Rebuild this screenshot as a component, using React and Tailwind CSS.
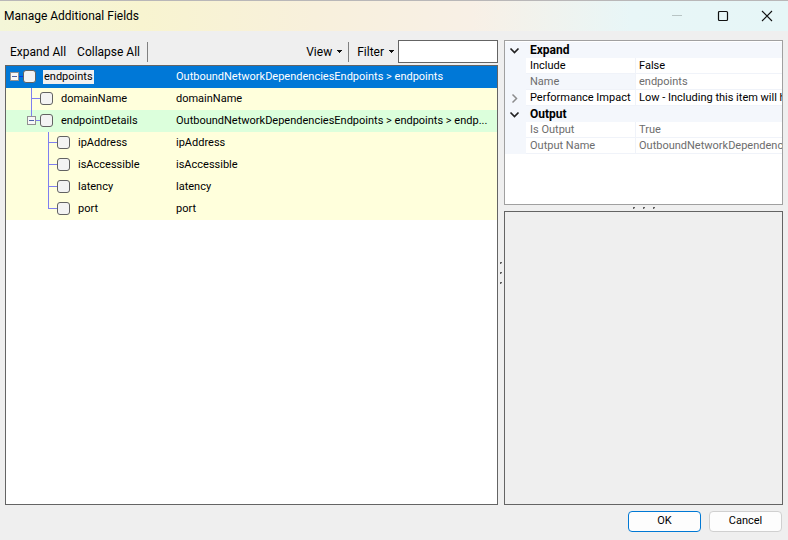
import React from "react";

const fields = [
  { name: "endpoints", path: "OutboundNetworkDependenciesEndpoints > endpoints", depth: 0, expandable: true, tone: "bg-[#0078d7] text-white", selected: true },
  { name: "domainName", path: "domainName", depth: 1, tone: "bg-[#ffffdc]" },
  { name: "endpointDetails", path: "OutboundNetworkDependenciesEndpoints > endpoints > endp...", depth: 1, expandable: true, last: true, tone: "bg-[#dcffdc]" },
  { name: "ipAddress", path: "ipAddress", depth: 2, tone: "bg-[#ffffdc]" },
  { name: "isAccessible", path: "isAccessible", depth: 2, tone: "bg-[#ffffdc]" },
  { name: "latency", path: "latency", depth: 2, tone: "bg-[#ffffdc]" },
  { name: "port", path: "port", depth: 2, last: true, tone: "bg-[#ffffdc]" },
];

const groups = [
  {
    title: "Expand",
    items: [
      { name: "Include", value: "False" },
      { name: "Name", value: "endpoints", muted: true, shaded: true },
      { name: "Performance Impact", value: "Low - Including this item will ha", expandable: true },
    ],
  },
  {
    title: "Output",
    items: [
      { name: "Is Output", value: "True", muted: true },
      { name: "Output Name", value: "OutboundNetworkDependenci", muted: true },
    ],
  },
];

function Guide({ depth, expandable, last }) {
  const width = 17 + depth * 17;
  const x = 8 + depth * 17;
  return (
    <svg width={width} height="22" className="shrink-0" shapeRendering="crispEdges" aria-hidden="true">
      {depth > 0 && <rect x={x} y="0" width="1" height={last ? 11 : 22} fill="#7f7ff0" />}
      <rect x={x} y="10" width={width - x} height="1" fill={depth ? "#7f7ff0" : "#0038e8"} />
      {expandable && (
        <g>
          <rect x={x - 4} y="6" width="9" height="9" fill="#919191" />
          <rect x={x - 3} y="7" width="7" height="7" fill="#f7f7f7" />
          <rect x={x - 2} y="10" width="5" height="1" fill="#4b63a7" />
        </g>
      )}
    </svg>
  );
}

function Chevron({ open }) {
  return (
    <svg width="20" height="15" viewBox="0 0 20 15" fill="none" className="block" aria-hidden="true">
      {open ? (
        <path d="M5.5 5.5 9.5 9.5 13.5 5.5" stroke="#222" strokeWidth="1.7" />
      ) : (
        <path d="M7.5 3.5 11.5 7.5 7.5 11.5" stroke="#8c8c8c" strokeWidth="1.5" />
      )}
    </svg>
  );
}

function MenuButton({ children }) {
  return (
    <button type="button" className="flex items-center gap-[5px]">
      {children}
      <svg width="5" height="3" aria-hidden="true" shapeRendering="crispEdges">
        <path d="M0 0H5V1H4V2H3V3H2V2H1V1H0Z" fill="#111" />
      </svg>
    </button>
  );
}

function Grip({ vertical }) {
  return (
    <div className={vertical ? "flex w-[6px] flex-col items-center justify-center gap-2" : "flex h-[6px] items-center justify-center gap-2"} role="separator">
      {[0, 1, 2].map((i) => (
        <span key={i} className="size-[2px] border-t border-l border-[#606060] bg-[#c4c4c4]" />
      ))}
    </div>
  );
}

export default function App() {
  return (
    <div className="flex h-screen flex-col overflow-hidden bg-[#efefef] font-['Roboto',sans-serif] text-[11px] text-black">
      <header className="flex h-[31px] shrink-0 items-center justify-between border-t border-[#b9b7b8] bg-[linear-gradient(90deg,#f4f6d8_0%,#f8f4d0_18%,#f8f0dc_40%,#f8f0e6_60%,#e8f6f7_80%,#e6f6f7_100%)] pl-1">
        <h1 className="text-[12px]">Manage Additional Fields</h1>
        <div className="flex">
          <button type="button" aria-label="Minimize" disabled className="flex w-[46px] justify-center">
            <svg width="12" height="12"><path d="M1 5.5H11" stroke="#b8c4c4" /></svg>
          </button>
          <button type="button" aria-label="Maximize" className="flex w-[46px] justify-center">
            <svg width="12" height="12"><rect x="1.5" y="1.5" width="9" height="9" rx="1" fill="none" stroke="#111" strokeWidth="1.2" /></svg>
          </button>
          <button type="button" aria-label="Close" className="flex w-[42px] justify-center">
            <svg width="12" height="12"><path d="M1 1 11 11M11 1 1 11" stroke="#111" strokeWidth="1.1" /></svg>
          </button>
        </div>
      </header>

      <main className="flex min-h-0 flex-1 px-[5px] pt-[9px]">
        <section className="flex min-w-0 flex-1 flex-col">
          <div className="flex h-[25px] items-start justify-between text-[12px]">
            <div className="flex h-[23px] items-center gap-[11px] pl-[5px]">
              <button type="button">Expand All</button>
              <button type="button">Collapse All</button>
              <span className="-ml-1 h-5 w-px bg-[#808080]" />
            </div>
            <div className="flex h-[23px] items-center">
              <MenuButton>View</MenuButton>
              <span className="mr-2 ml-[6px] h-5 w-px bg-[#808080]" />
              <MenuButton>Filter</MenuButton>
              <input aria-label="Filter" type="text" className="ml-1 h-[23px] w-[100px] border border-[#646464] bg-white px-1 outline-none" />
            </div>
          </div>
          <div className="min-h-0 flex-1 overflow-hidden border border-[#646464] bg-white">
            <table className="w-full table-fixed border-separate border-spacing-0">
              <colgroup>
                <col className="w-[170px]" />
                <col />
              </colgroup>
              <tbody>
                {fields.map((f) => (
                  <tr key={f.name} className={f.tone}>
                    <td className="p-0">
                      <div className="flex h-[22px] items-center">
                        <Guide depth={f.depth} expandable={f.expandable} last={f.last} />
                        <input id={f.name} type="checkbox" className="mb-px size-[13px] shrink-0 appearance-none rounded-[3px] border border-[#626262] bg-[#f3f3f3]" />
                        <label htmlFor={f.name} className={f.selected ? "ml-[7px] bg-[#f0f0f0] px-px leading-[14px] text-black" : "ml-[7px] px-px leading-[14px]"}>
                          {f.name}
                        </label>
                      </div>
                    </td>
                    <td className="truncate p-0 leading-[22px]">{f.path}</td>
                  </tr>
                ))}
              </tbody>
            </table>
          </div>
        </section>

        <Grip vertical />

        <aside className="flex w-[279px] shrink-0 flex-col">
          <div className="h-[165px] overflow-hidden border border-[#a0a0a0] bg-white pt-px">
            <table className="w-full table-fixed border-separate border-spacing-0 leading-[15px]">
              <colgroup>
                <col className="w-[21px]" />
                <col className="w-[110px]" />
                <col />
              </colgroup>
              {groups.map((g) => (
                <tbody key={g.title}>
                  <tr className="h-4 bg-[#f4f7fc]">
                    <td className="p-0"><Chevron open /></td>
                    <th colSpan={2} className="p-0 pl-1 text-left text-[12px] font-bold">{g.title}</th>
                  </tr>
                  {g.items.map((p) => (
                    <tr key={p.name} className={p.muted ? "h-4 text-[#6d6d6d]" : "h-4"}>
                      <td className="bg-[#f4f7fc] p-0">{p.expandable && <Chevron />}</td>
                      <td className={p.shaded ? "border-r border-b border-[#f0f3f9] bg-[#f4f7fc] p-0 pl-1 whitespace-nowrap" : "border-r border-b border-[#f0f3f9] p-0 pl-1 whitespace-nowrap"}>{p.name}</td>
                      <td className="overflow-hidden border-b border-[#f0f3f9] p-0 pl-[3px] whitespace-nowrap">{p.value}</td>
                    </tr>
                  ))}
                </tbody>
              ))}
            </table>
          </div>
          <Grip />
          <div className="min-h-0 flex-1 border border-[#646464]" />
        </aside>
      </main>

      <footer className="flex h-[35px] shrink-0 items-start justify-end gap-2 px-[6px] pt-[6px]">
        <button type="button" className="h-[21px] w-[73px] rounded-[4px] border border-[#0078d4] bg-[#fdfdfd]">OK</button>
        <button type="button" className="h-[21px] w-[73px] rounded-[4px] border border-[#d0d0d0] bg-[#fdfdfd]">Cancel</button>
      </footer>
    </div>
  );
}
